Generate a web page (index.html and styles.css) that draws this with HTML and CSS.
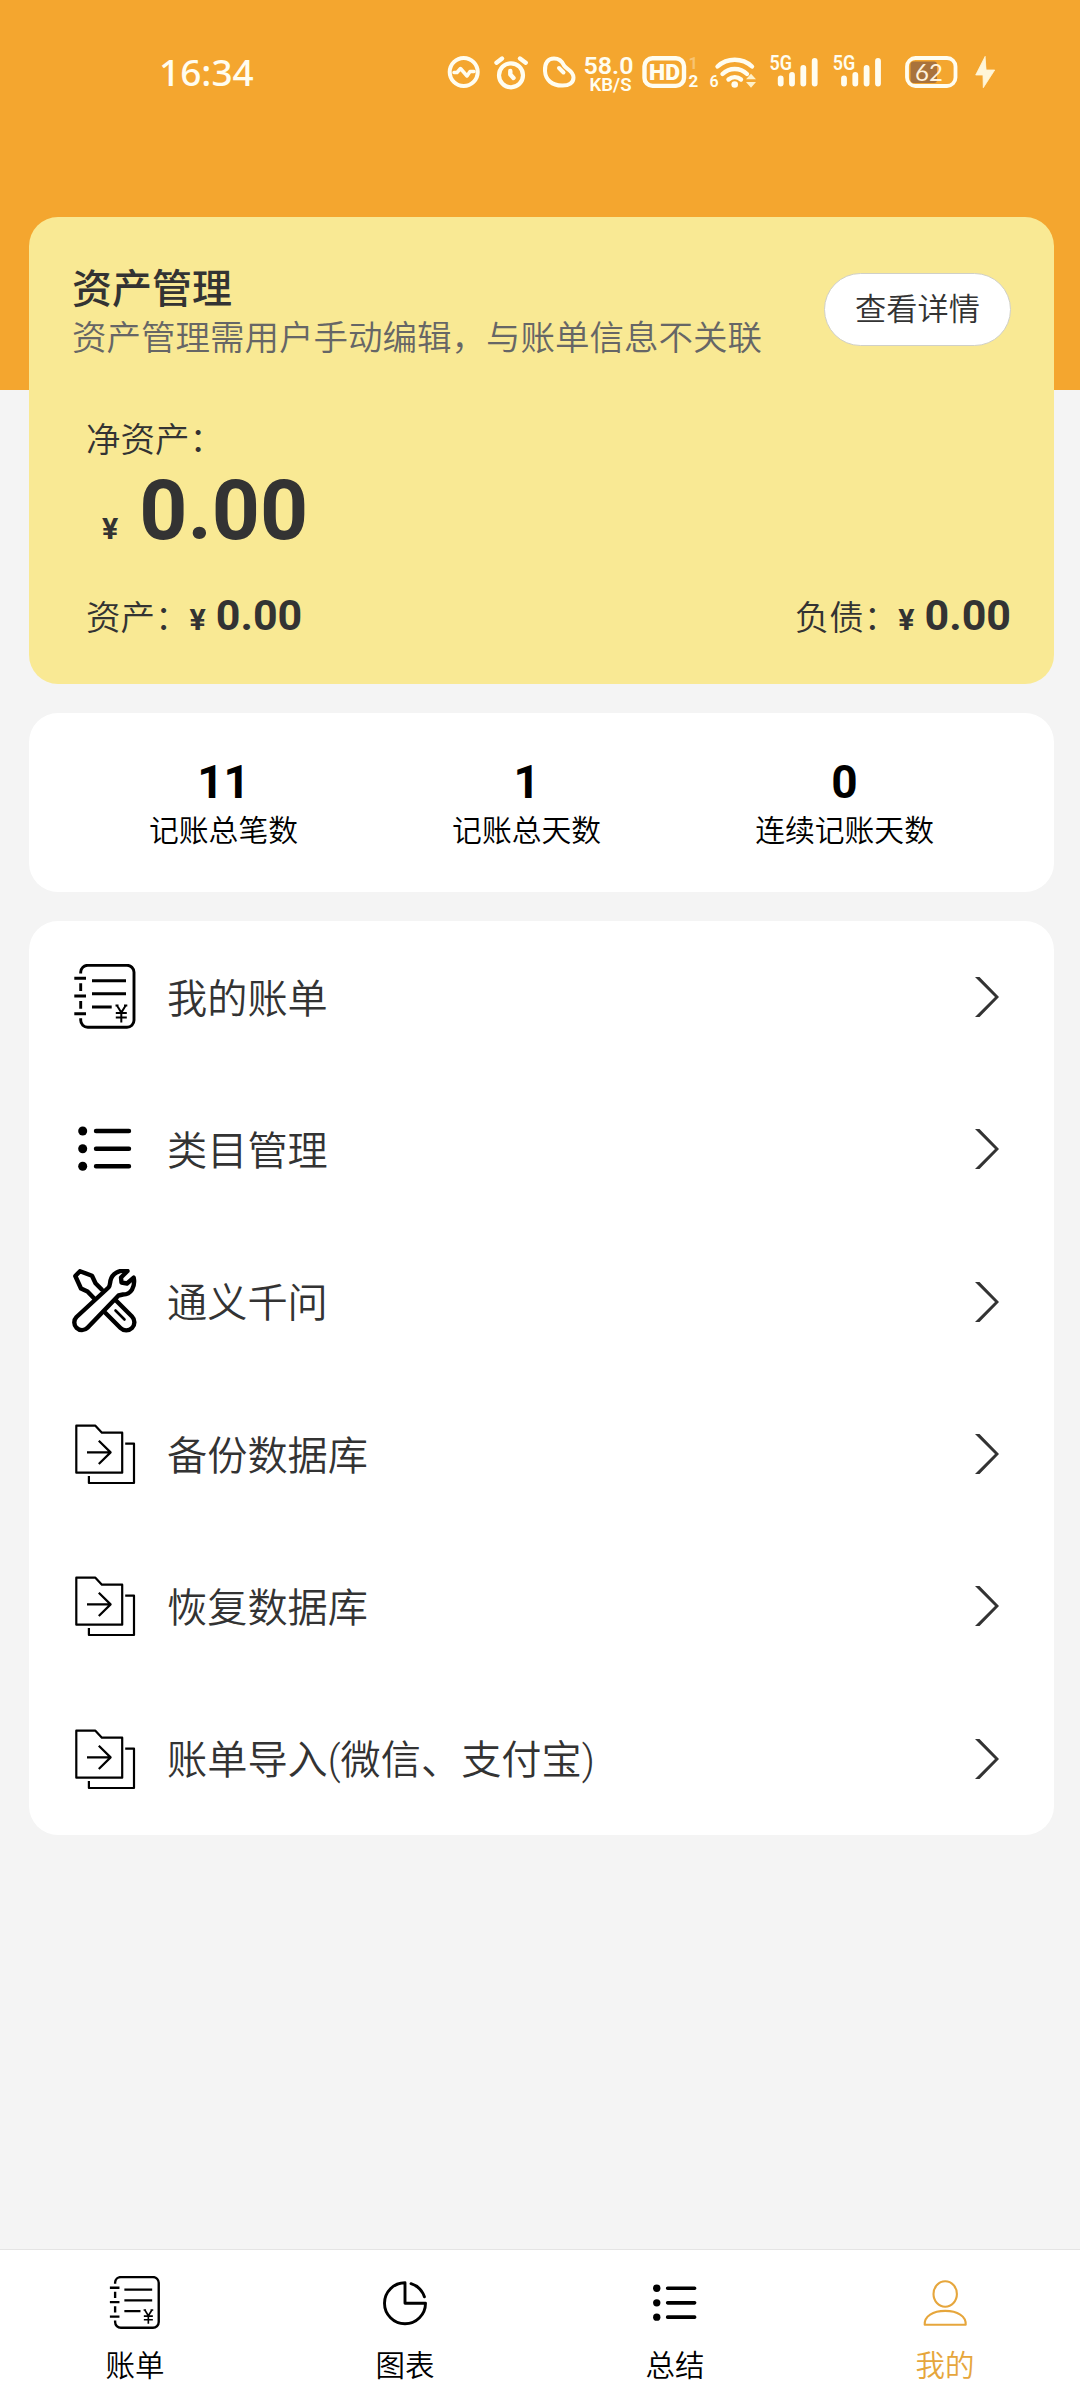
FILE: index.html
```html
<!DOCTYPE html>
<html lang="zh-CN">
<head>
<meta charset="utf-8">
<title>我的</title>
<link rel="stylesheet" href="styles.css">
</head>
<body>
<svg class="sprite" aria-hidden="true">
  <symbol id="i-book" viewBox="0 0 66 66">
    <g fill="none" stroke="currentColor" stroke-width="2.9">
      <path d="M8.7 9.5V8a7 7 0 0 1 7-6.7H55a7 7 0 0 1 7 7V56.300a7 7 0 0 1-7 7H15.700a7 7 0 0 1-7-7V54.300M8.700 19.300V27M8.700 37V44.700"/>
      <path d="M2.300 14.300H14M2.300 32H14M2.300 49.700H14M20 16.700H54M20 29.800H54M20 43H39.700"/>
      <path stroke-width="2" d="M43.500 41.500H46.500M52 41.500H55.300M45 41.500L49.300 48.500L53.700 41.500M49.300 48.500V58.500M43.800 49H54.800M43.800 53.500H54.800"/>
    </g>
  </symbol>
  <symbol id="i-list" viewBox="0 0 66 66">
    <g fill="currentColor"><circle cx="10.700" cy="15" r="4.500"/><circle cx="10.700" cy="32.800" r="4.500"/><circle cx="10.700" cy="50.300" r="4.500"/></g>
    <path d="M24 15H57M24 32.800H57M24 50.300H57" stroke="currentColor" stroke-width="4.400" stroke-linecap="round"/>
  </symbol>
  <symbol id="i-tools" viewBox="0 0 66 66">
    <g fill="none" stroke="currentColor" stroke-width="4.400" stroke-linejoin="round" stroke-linecap="round">
      <path d="M29.700 20.500L23.500 14.200L20 6.800L8 2.200L3.300 7L9 19.500L15.500 22.500L22 29.300"/>
      <path d="M44 31.500L60 47.500A8 8 0 0 1 48.500 59L33.500 44"/>
      <path stroke-width="2.600" d="M43.500 41.500L52.500 50.500"/>
      <path d="M4.500 48L36.500 18.500C38 17 38 14 38.500 11.500C40 4.500 47 .5 55.500 2L49 8.500L49.500 13.500L55 14.500L61.700 8.700C63.500 18 59 25.500 51 25.500L46.500 26.500L15.500 58.800A7.500 7.500 0 0 1 4.500 48Z"/>
    </g>
  </symbol>
  <symbol id="i-folder" viewBox="0 0 66 66">
    <g fill="none" stroke="currentColor" stroke-width="2.200" stroke-linejoin="round">
      <path d="M4.300 4.700H23.400L29.900 11.700H50.200V51.700H4.300Z"/>
      <path d="M15 31.400H39M26.800 19.700L38.600 31.400L26.800 43"/>
      <path d="M53.200 22.700H62V62H16.900V55"/>
    </g>
  </symbol>
  <symbol id="i-arrow" viewBox="0 0 24 42">
    <path d="M0 1H4.500L24 21L4.500 41H0L20 21Z" fill="currentColor"/>
  </symbol>
  <symbol id="i-pie" viewBox="0 0 54 54">
    <g fill="none" stroke="currentColor" stroke-width="2.900" stroke-linecap="round" stroke-linejoin="round">
      <path d="M27 6.700A20.500 20.500 0 1 0 47.500 27.200H27Z"/>
      <path d="M33 7.700A20.500 20.500 0 0 1 46.400 20.800"/>
    </g>
  </symbol>
  <symbol id="i-user" viewBox="0 0 54 54">
    <g fill="none" stroke="currentColor" stroke-width="2.100" stroke-linejoin="round">
      <ellipse cx="27.200" cy="18" rx="11.700" ry="12.700"/>
      <path d="M6.700 48.700C6.200 40 15 34.900 27.200 34.900S48.200 40 47.700 48.700Z"/>
    </g>
  </symbol>
</svg>

<div class="page">
  <header class="top">
    <div class="status">
      <span class="clock">16:34</span>
      <svg class="status-icons" viewBox="440 45 560 54" fill="none" stroke="#fffdf0" stroke-linecap="round" stroke-linejoin="round">
        <g stroke-width="4">
          <circle cx="463.700" cy="72" r="14"/>
          <path stroke-width="3.500" d="M454 72.500H457L460.500 68.500L467 76L470 71.500H474"/>
          <circle cx="511" cy="75.300" r="12" stroke-width="4.200"/>
          <path stroke-width="4.400" d="M496.500 62.700L502 58.500M520 58.500L525.700 62.700M510.300 71V74.500L513.500 78"/>
          <path d="M545 71C544.500 63 548 58.500 554 58.500C560 58.500 562.500 62 564 65.500C566 69 573.500 70.500 573.500 77.500C573.500 83 569 85.800 562 85.600C552 85.500 545.500 80 545 71Z"/>
          <path d="M559 68L563.500 72.500"/>
          <rect x="644.500" y="58.300" width="39.500" height="27.600" rx="8" stroke-width="4.400"/>
        </g>
        <g class="st-text">
          <text x="583.500" y="73.500" font-size="24.500" textLength="50" lengthAdjust="spacingAndGlyphs">58.0</text>
          <text x="589.500" y="90.700" font-size="18.500" textLength="42" lengthAdjust="spacingAndGlyphs">KB/S</text>
          <text class="st-hd" x="649" y="80" font-size="22" textLength="31" lengthAdjust="spacingAndGlyphs">HD</text>
          <text x="688.500" y="69" font-size="16.500" opacity=".35">1</text>
          <text x="688.500" y="87.300" font-size="17" font-weight="700">2</text>
          <text x="709.500" y="87.300" font-size="16">6</text>
          <text x="769.500" y="70" font-size="19.500" textLength="22.500" lengthAdjust="spacingAndGlyphs">5G</text>
          <text x="832.800" y="70" font-size="19.500" textLength="22.500" lengthAdjust="spacingAndGlyphs">5G</text>
        </g>
        <g stroke-width="4.400">
          <path d="M717.500 66.500A25.500 25.500 0 0 1 752 66.500M722.500 74A17.500 17.500 0 0 1 747 74M728.500 79.500A9.500 9.500 0 0 1 741 79.500"/>
        </g>
        <circle cx="734.700" cy="84.500" r="3.300" fill="#fffdf0" stroke="none"/>
        <path d="M746 79.300H756L751 73.700ZM746 82H756L751 87.700Z" fill="#fff1c9" stroke="none"/>
        <path stroke-width="5.800" d="M780.700 78.500V83.500M792 75V83.500M803.300 68V83.500M814.700 61V83.500M844 78.500V83.500M855.300 75V83.500M866.600 68V83.500M878 61V83.500"/>
        <rect x="910.500" y="61.500" width="26.500" height="21.500" rx="3" fill="#a8723c" stroke="none"/>
        <rect x="907" y="58" width="48.500" height="28" rx="8.500" stroke-width="3.800"/>
        <text class="st-batt" x="915" y="81.300" font-size="24">62</text>
        <path d="M985 56.700L975.700 75H983L983.300 87.700L994.700 70H986.300Z" fill="#fff6d8" stroke="#fff6d8" stroke-width=".8"/>
      </svg>
    </div>
  </header>

  <main class="content">
    <section class="assets">
      <div class="assets-head">
        <div>
          <h1 class="title">资产管理</h1>
          <p class="subtitle">资产管理需用户手动编辑，与账单信息不关联</p>
        </div>
        <button class="detail">查看详情</button>
      </div>
      <div class="net-label">净资产：</div>
      <div class="net"><span class="yen">¥</span><span class="net-value">0.00</span></div>
      <div class="split">
        <div class="pair">资产：<span class="yen">¥</span><span class="value">0.00</span></div>
        <div class="pair">负债：<span class="yen">¥</span><span class="value">0.00</span></div>
      </div>
    </section>

    <section class="stats">
      <div class="stat"><b class="num">11</b><span>记账总笔数</span></div>
      <div class="stat"><b class="num">1</b><span>记账总天数</span></div>
      <div class="stat"><b class="num">0</b><span>连续记账天数</span></div>
    </section>

    <ul class="menu">
      <li class="item"><svg class="icon"><use href="#i-book"/></svg><span class="label">我的账单</span><svg class="arrow"><use href="#i-arrow"/></svg></li>
      <li class="item"><svg class="icon"><use href="#i-list"/></svg><span class="label">类目管理</span><svg class="arrow"><use href="#i-arrow"/></svg></li>
      <li class="item"><svg class="icon"><use href="#i-tools"/></svg><span class="label">通义千问</span><svg class="arrow"><use href="#i-arrow"/></svg></li>
      <li class="item"><svg class="icon"><use href="#i-folder"/></svg><span class="label">备份数据库</span><svg class="arrow"><use href="#i-arrow"/></svg></li>
      <li class="item"><svg class="icon"><use href="#i-folder"/></svg><span class="label">恢复数据库</span><svg class="arrow"><use href="#i-arrow"/></svg></li>
      <li class="item"><svg class="icon"><use href="#i-folder"/></svg><span class="label">账单导入(微信、支付宝)</span><svg class="arrow"><use href="#i-arrow"/></svg></li>
    </ul>
  </main>

  <nav class="tabs">
    <a class="tab"><svg class="tab-icon"><use href="#i-book"/></svg><span>账单</span></a>
    <a class="tab"><svg class="tab-icon"><use href="#i-pie"/></svg><span>图表</span></a>
    <a class="tab"><svg class="tab-icon"><use href="#i-list"/></svg><span>总结</span></a>
    <a class="tab active"><svg class="tab-icon"><use href="#i-user"/></svg><span>我的</span></a>
  </nav>
</div>
</body>
</html>
```
FILE: styles.css
```css
* { box-sizing: border-box; margin: 0; padding: 0; }

body {
  font-family: Roboto, "Noto Sans CJK SC", sans-serif;
  font-weight: 350;
  color: #333;
  background: #f4f4f4;
}

.sprite { display: none; }

.page {
  width: 1080px;
  height: 2400px;
  display: flex;
  flex-direction: column;
}

.top {
  height: 390px;
  flex: none;
  background: #f4a62f;
}

.status {
  display: flex;
  align-items: center;
  justify-content: space-between;
  padding: 45px 80px 0 159px;
  height: 99px;
}

.clock {
  font: 500 37px/54px "Noto Sans", sans-serif;
  color: #fffdf0;
}

.status-icons { width: 560px; height: 54px; }

.st-text {
  font-family: Roboto, sans-serif;
  font-weight: 600;
  fill: #fffdf0;
  stroke: none;
}

.st-hd { font-weight: 900; }

.st-batt {
  font-family: Lato, sans-serif;
  font-weight: 400;
  fill: #fff3dc;
  stroke: none;
}

.content {
  flex: 1;
  margin-top: -173px;
  padding: 0 26px 0 29px;
  display: flex;
  flex-direction: column;
  gap: 29px;
}

.assets {
  height: 467px;
  border-radius: 29px;
  background: #f9e994;
  padding: 48px 43px 0 43px;
}

.assets-head {
  display: flex;
  justify-content: space-between;
  align-items: flex-start;
}

.title { font-size: 40px; line-height: 49px; font-weight: 500; }

.subtitle { font-size: 34.500px; line-height: 48px; color: #666; }

.detail {
  width: 187px;
  height: 73px;
  margin-top: 8px;
  border: 1px solid #d0d0c8;
  border-radius: 37px;
  background: #fff;
  font: 350 31.200px/71px Roboto, "Noto Sans CJK SC", sans-serif;
  color: #333;
}

.net-label {
  margin: 55px 0 0 14px;
  font-size: 34.500px;
  line-height: 46px;
}

.net {
  display: flex;
  align-items: baseline;
  padding-left: 30px;
  gap: 21px;
  line-height: 96px;
}

.yen { font-size: 30.400px; font-weight: 700; }

.net-value { font-size: 84px; font-weight: 700; }

.split {
  display: flex;
  justify-content: space-between;
  margin-top: 14px;
  padding-left: 14px;
}

.pair {
  display: flex;
  align-items: baseline;
  font-size: 34.500px;
  line-height: 48px;
}

.value { margin-left: 10px; font-size: 43px; font-weight: 700; }

.stats {
  height: 179px;
  border-radius: 29px;
  background: #fff;
  color: #000;
  display: flex;
  justify-content: space-around;
  padding: 42px 43px 0;
}

.stat {
  display: flex;
  flex-direction: column;
  align-items: center;
  font-size: 29.800px;
  line-height: 43px;
}

.num { font-size: 46px; line-height: 54px; }

.menu {
  height: 914px;
  border-radius: 29px;
  background: #fff;
  list-style: none;
  display: flex;
  flex-direction: column;
}

.item {
  flex: 1;
  display: flex;
  align-items: center;
  padding: 0 55px 0 43px;
}

.icon { width: 66px; height: 66px; color: #000; }

.label { flex: 1; margin-left: 29px; padding-top: 5px; font-size: 40.200px; line-height: 56px; }

.arrow { width: 24px; height: 42px; color: #333; }

.tabs {
  height: 151px;
  flex: none;
  background: #fff;
  border-top: 1px solid #e4e4e4;
  display: flex;
}

.tab {
  flex: 1;
  display: flex;
  flex-direction: column;
  align-items: center;
  padding-top: 26px;
  gap: 15px;
  font-size: 29.500px;
  line-height: 43px;
  color: #000;
}

.tab.active { color: #e6a63c; }

.tab-icon { width: 54px; height: 54px; }
```
